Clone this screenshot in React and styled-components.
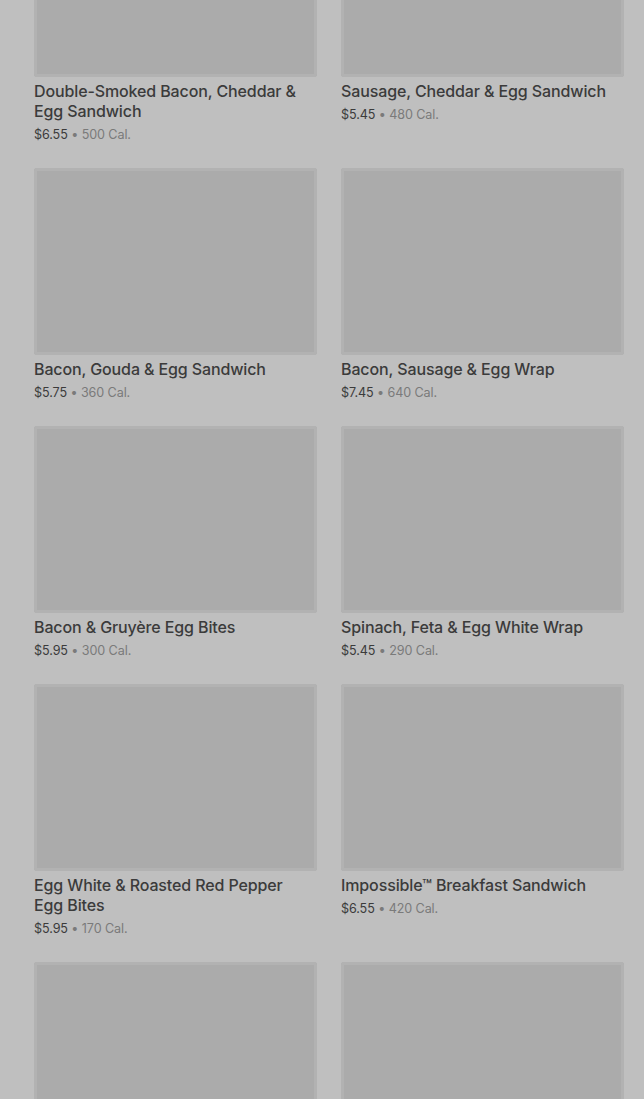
import React from "react";
import styled, { createGlobalStyle } from "styled-components";

const Global = createGlobalStyle`
  html, body { margin: 0; padding: 0; background: #bfbfbf; }
  body { font-family: Inter, Roboto, "Liberation Sans", sans-serif; overflow: hidden; }
`;

const Page = styled.div`
  height: 1099px;
  overflow: hidden;
  padding: 0 20px 0 34px;
`;

const Grid = styled.div`
  margin-top: -110px;
  display: grid;
  grid-template-columns: 283px 283px;
  column-gap: 24px;
  row-gap: 24px;
`;

const Card = styled.div`
  display: flex;
  flex-direction: column;
`;

const Thumb = styled.div`
  height: 187px;
  border-radius: 3px;
  background: #ababab;
  box-shadow: inset 0 0 0 3px #b2b2b2;
`;

const Title = styled.div`
  margin-top: 4px;
  padding-right: 10px;
  font-size: 16px;
  line-height: 20px;
  font-weight: 500;
  letter-spacing: -0.12px;
  color: #3b3b3b;
`;

const Meta = styled.div`
  margin-top: 5px;
  font-size: 12.6px;
  line-height: 18px;
  color: #3b3b3b;
  letter-spacing: -0.1px;
`;

const Cal = styled.span`
  color: #7a7a7a;
`;

const items = [
  ["Double-Smoked Bacon, Cheddar & Egg Sandwich", "$6.55", "500 Cal."],
  ["Sausage, Cheddar & Egg Sandwich", "$5.45", "480 Cal."],
  ["Bacon, Gouda & Egg Sandwich", "$5.75", "360 Cal."],
  ["Bacon, Sausage & Egg Wrap", "$7.45", "640 Cal."],
  ["Bacon & Gruyère Egg Bites", "$5.95", "300 Cal."],
  ["Spinach, Feta & Egg White Wrap", "$5.45", "290 Cal."],
  ["Egg White & Roasted Red Pepper Egg Bites", "$5.95", "170 Cal."],
  ["Impossible™ Breakfast Sandwich", "$6.55", "420 Cal."],
  ["", "", ""],
  ["", "", ""],
];

export default function App() {
  return (
    <>
      <Global />
      <Page>
        <Grid>
          {items.map(([t, p, c], i) => (
            <Card key={i}>
              <Thumb />
              {t && <Title>{t}</Title>}
              {p && (
                <Meta>
                  {p} <Cal>• {c}</Cal>
                </Meta>
              )}
            </Card>
          ))}
        </Grid>
      </Page>
    </>
  );
}
